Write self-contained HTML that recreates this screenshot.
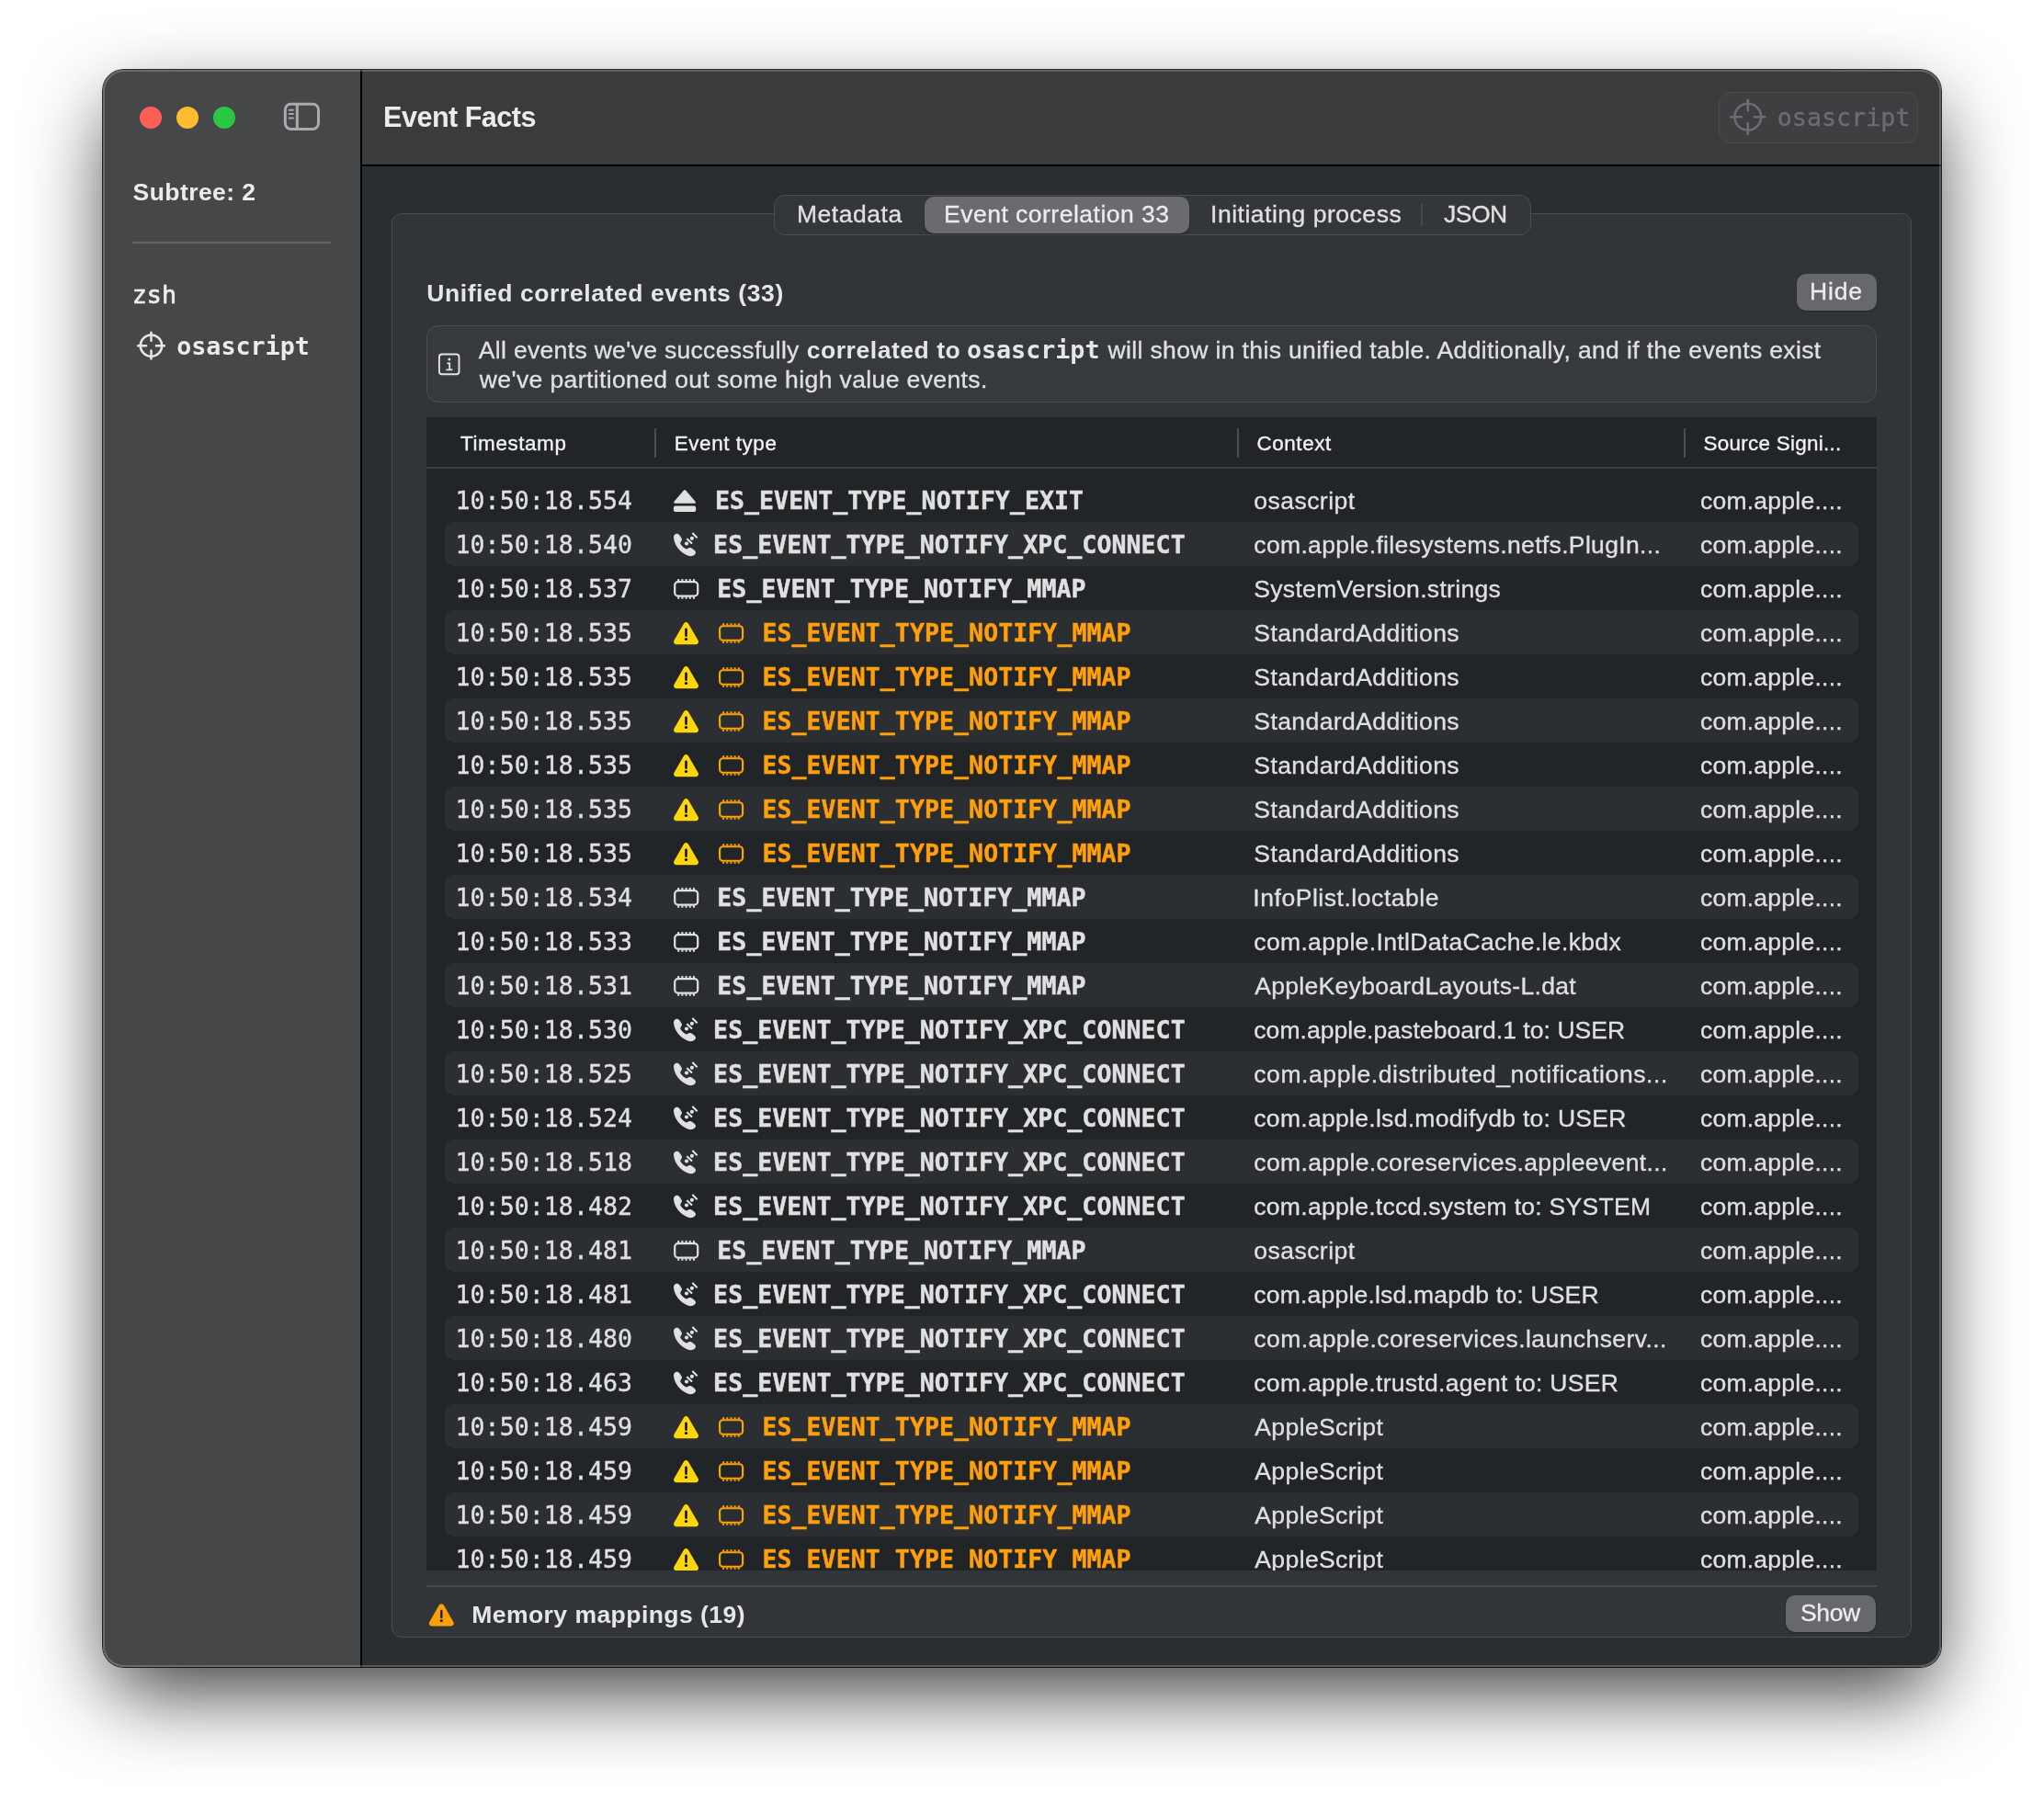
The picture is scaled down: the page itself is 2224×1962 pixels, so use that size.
<!DOCTYPE html><html lang="en"><head><meta charset="utf-8"><title>Event Facts</title><style>

html,body{margin:0;padding:0;background:#fff;}
body{width:2224px;height:1962px;position:relative;overflow:hidden;font-family:'Liberation Sans', Arial, sans-serif;}
.b{position:absolute;display:block;}
.t{position:absolute;white-space:nowrap;line-height:1;margin:0;padding:0;}
#txt{position:absolute;left:0;top:0;width:2224px;height:1962px;will-change:transform;}
#win{position:absolute;left:112px;top:76px;width:2000px;height:1738px;border-radius:23px;overflow:hidden;background:#2b2e31;}
#shadow{position:absolute;left:112px;top:76px;width:2000px;height:1738px;border-radius:23px;
 box-shadow:0 0 0 1px rgba(0,0,0,.8),0 34px 90px -9px rgba(0,0,0,.8);}
#rim{position:absolute;left:112px;top:76px;width:2000px;height:1738px;border-radius:23px;box-sizing:border-box;border:2px solid rgba(255,255,255,.2);pointer-events:none;}
#clip{position:absolute;left:0;top:0;width:2224px;height:1709px;overflow:hidden;}

</style></head><body>
<div id="shadow"></div>
<div id="win"><div class="b" style="left:-112px;top:-76px;width:2224px;height:1962px">
<div class="b" style="left:112px;top:76px;width:280px;height:1738px;background:#464749;"></div>
<div class="b" style="left:392px;top:76px;width:2px;height:1738px;background:#000;"></div>
<div class="b" style="left:394px;top:76px;width:1718px;height:103.5px;background:#3a3b3d;"></div>
<div class="b" style="left:394px;top:179.3px;width:1718px;height:1.9px;background:#000;"></div>
<div class="b" style="left:152px;top:116px;width:24px;height:24px;background:#ff5f57;border-radius:12px;"></div>
<div class="b" style="left:192px;top:116px;width:24px;height:24px;background:#febc2e;border-radius:12px;"></div>
<div class="b" style="left:232px;top:116px;width:24px;height:24px;background:#28c840;border-radius:12px;"></div>
<svg class="b" style="left:300px;top:104px" width="56" height="46" viewBox="0 0 56 46"><g fill="none" stroke="#a9aaac"><rect x="10.3" y="9.2" width="36.2" height="27.3" rx="6.2" stroke-width="3"/><path d="M23.3 9.5V36.2" stroke-width="3"/><path d="M14.6 15.7H18.9M14.6 20H18.9M14.6 24.4H18.9" stroke-width="2" stroke-linecap="round"/></g></svg>
<div class="b" style="left:144px;top:263px;width:216px;height:2px;background:#646567;"></div>
<div class="b" style="left:1869.5px;top:100px;width:217px;height:55.5px;background:#3e3f41;border-radius:12px;border:1.5px solid #4a4b4d;box-sizing:border-box;"></div>
<div class="b" style="left:426px;top:232px;width:1654px;height:1550px;background:#323538;border-radius:11px;border:1.5px solid #494c4f;box-sizing:border-box;"></div>
<div class="b" style="left:842px;top:212px;width:824px;height:44px;background:#34373a;border-radius:12px;border:1.5px solid #4a4d50;box-sizing:border-box;"></div>
<div class="b" style="left:1006px;top:214px;width:288px;height:40px;background:#6a6b6e;border-radius:10px;box-shadow:0 1px 2px rgba(0,0,0,.35);"></div>
<div class="b" style="left:1546px;top:222px;width:1.6px;height:24px;background:#45484b;"></div>
<div class="b" style="left:1954.5px;top:298px;width:87.5px;height:40px;background:#67686b;border-radius:10px;box-shadow:0 1px 2px rgba(0,0,0,.35);"></div>
<div class="b" style="left:464px;top:354px;width:1578px;height:84px;background:#373a3d;border-radius:13px;border:1.5px solid #4b4e51;box-sizing:border-box;"></div>
<svg class="b" style="left:470px;top:378px" width="38" height="38" viewBox="0 0 38 38"><g fill="none" stroke="#e3e3e3"><rect x="7.9" y="7.5" width="21.6" height="21.8" rx="3" stroke-width="1.9"/><path d="M16.4 17.4H19.2V24.3M15.4 24.4H22.4" stroke-width="1.8"/></g><circle cx="18.8" cy="12.9" r="1.5" fill="#e3e3e3"/></svg>
<div class="b" style="left:464px;top:454px;width:1578px;height:1255px;background:#222527;"></div>
<div class="b" style="left:464px;top:508px;width:1578px;height:1.6px;background:#3c3f42;"></div>
<div class="b" style="left:712.2px;top:466.4px;width:1.7px;height:31.4px;background:#4a4d50;"></div>
<div class="b" style="left:1346.0px;top:466.4px;width:1.7px;height:31.4px;background:#4a4d50;"></div>
<div class="b" style="left:1832.0px;top:466.4px;width:1.7px;height:31.4px;background:#4a4d50;"></div>
<div class="b" style="left:484px;top:568px;width:1538px;height:48px;background:#2c2f32;border-radius:10px;"></div>
<div class="b" style="left:484px;top:664px;width:1538px;height:48px;background:#2c2f32;border-radius:10px;"></div>
<div class="b" style="left:484px;top:760px;width:1538px;height:48px;background:#2c2f32;border-radius:10px;"></div>
<div class="b" style="left:484px;top:856px;width:1538px;height:48px;background:#2c2f32;border-radius:10px;"></div>
<div class="b" style="left:484px;top:952px;width:1538px;height:48px;background:#2c2f32;border-radius:10px;"></div>
<div class="b" style="left:484px;top:1048px;width:1538px;height:48px;background:#2c2f32;border-radius:10px;"></div>
<div class="b" style="left:484px;top:1144px;width:1538px;height:48px;background:#2c2f32;border-radius:10px;"></div>
<div class="b" style="left:484px;top:1240px;width:1538px;height:48px;background:#2c2f32;border-radius:10px;"></div>
<div class="b" style="left:484px;top:1336px;width:1538px;height:48px;background:#2c2f32;border-radius:10px;"></div>
<div class="b" style="left:484px;top:1432px;width:1538px;height:48px;background:#2c2f32;border-radius:10px;"></div>
<div class="b" style="left:484px;top:1528px;width:1538px;height:48px;background:#2c2f32;border-radius:10px;"></div>
<div class="b" style="left:484px;top:1624px;width:1538px;height:48px;background:#2c2f32;border-radius:10px;"></div>
<div class="b" style="left:464px;top:1725.3px;width:1578px;height:1.6px;background:#484b4e;"></div>
<div class="b" style="left:1943px;top:1736px;width:98px;height:40px;background:#67686b;border-radius:10px;box-shadow:0 1px 2px rgba(0,0,0,.35);"></div>
</div></div>
<div id="rim"></div>
<div id="txt"><div id="clip">
<div class="t" style="font-family:'DejaVu Sans Mono', 'Liberation Mono', monospace;font-size:26.5px;font-weight:400;color:#dfe0e0;left:495.50px;top:531.80px;letter-spacing:0.096px;-webkit-text-stroke:0.35px;">10:50:18.554</div>
<div class="t" style="font-family:'DejaVu Sans Mono', 'Liberation Mono', monospace;font-size:26.5px;font-weight:700;color:#dfe0e0;left:777.90px;top:531.80px;letter-spacing:0.096px;-webkit-text-stroke:0.45px;">ES_EVENT_TYPE_NOTIFY_EXIT</div>
<div class="t" style="font-family:'Liberation Sans', Arial, sans-serif;font-size:26.52px;font-weight:400;color:#dfe0e0;left:1364.30px;top:531.80px;letter-spacing:0.458px;-webkit-text-stroke:0.3px;">osascript</div>
<div class="t" style="font-family:'Liberation Sans', Arial, sans-serif;font-size:26.52px;font-weight:400;color:#dfe0e0;left:1849.90px;top:531.80px;letter-spacing:0.247px;-webkit-text-stroke:0.3px;">com.apple....</div>
<div class="t" style="font-family:'DejaVu Sans Mono', 'Liberation Mono', monospace;font-size:26.5px;font-weight:400;color:#dfe0e0;left:495.50px;top:579.80px;letter-spacing:0.096px;-webkit-text-stroke:0.35px;">10:50:18.540</div>
<div class="t" style="font-family:'DejaVu Sans Mono', 'Liberation Mono', monospace;font-size:26.5px;font-weight:700;color:#dfe0e0;left:776.10px;top:579.80px;letter-spacing:0.096px;-webkit-text-stroke:0.45px;">ES_EVENT_TYPE_NOTIFY_XPC_CONNECT</div>
<div class="t" style="font-family:'Liberation Sans', Arial, sans-serif;font-size:26.52px;font-weight:400;color:#dfe0e0;left:1364.30px;top:579.80px;letter-spacing:0.340px;-webkit-text-stroke:0.3px;">com.apple.filesystems.netfs.PlugIn...</div>
<div class="t" style="font-family:'Liberation Sans', Arial, sans-serif;font-size:26.52px;font-weight:400;color:#dfe0e0;left:1849.90px;top:579.80px;letter-spacing:0.247px;-webkit-text-stroke:0.3px;">com.apple....</div>
<div class="t" style="font-family:'DejaVu Sans Mono', 'Liberation Mono', monospace;font-size:26.5px;font-weight:400;color:#dfe0e0;left:495.50px;top:627.80px;letter-spacing:0.096px;-webkit-text-stroke:0.35px;">10:50:18.537</div>
<div class="t" style="font-family:'DejaVu Sans Mono', 'Liberation Mono', monospace;font-size:26.5px;font-weight:700;color:#dfe0e0;left:780.30px;top:627.80px;letter-spacing:0.096px;-webkit-text-stroke:0.45px;">ES_EVENT_TYPE_NOTIFY_MMAP</div>
<div class="t" style="font-family:'Liberation Sans', Arial, sans-serif;font-size:26.52px;font-weight:400;color:#dfe0e0;left:1364.30px;top:627.80px;letter-spacing:0.308px;-webkit-text-stroke:0.3px;">SystemVersion.strings</div>
<div class="t" style="font-family:'Liberation Sans', Arial, sans-serif;font-size:26.52px;font-weight:400;color:#dfe0e0;left:1849.90px;top:627.80px;letter-spacing:0.247px;-webkit-text-stroke:0.3px;">com.apple....</div>
<div class="t" style="font-family:'DejaVu Sans Mono', 'Liberation Mono', monospace;font-size:26.5px;font-weight:400;color:#dfe0e0;left:495.50px;top:675.80px;letter-spacing:0.096px;-webkit-text-stroke:0.35px;">10:50:18.535</div>
<div class="t" style="font-family:'DejaVu Sans Mono', 'Liberation Mono', monospace;font-size:26.5px;font-weight:700;color:#ff9f0a;left:829.40px;top:675.80px;letter-spacing:0.096px;-webkit-text-stroke:0.45px;">ES_EVENT_TYPE_NOTIFY_MMAP</div>
<div class="t" style="font-family:'Liberation Sans', Arial, sans-serif;font-size:26.52px;font-weight:400;color:#dfe0e0;left:1364.30px;top:675.80px;letter-spacing:0.410px;-webkit-text-stroke:0.3px;">StandardAdditions</div>
<div class="t" style="font-family:'Liberation Sans', Arial, sans-serif;font-size:26.52px;font-weight:400;color:#dfe0e0;left:1849.90px;top:675.80px;letter-spacing:0.247px;-webkit-text-stroke:0.3px;">com.apple....</div>
<div class="t" style="font-family:'DejaVu Sans Mono', 'Liberation Mono', monospace;font-size:26.5px;font-weight:400;color:#dfe0e0;left:495.50px;top:723.80px;letter-spacing:0.096px;-webkit-text-stroke:0.35px;">10:50:18.535</div>
<div class="t" style="font-family:'DejaVu Sans Mono', 'Liberation Mono', monospace;font-size:26.5px;font-weight:700;color:#ff9f0a;left:829.40px;top:723.80px;letter-spacing:0.096px;-webkit-text-stroke:0.45px;">ES_EVENT_TYPE_NOTIFY_MMAP</div>
<div class="t" style="font-family:'Liberation Sans', Arial, sans-serif;font-size:26.52px;font-weight:400;color:#dfe0e0;left:1364.30px;top:723.80px;letter-spacing:0.410px;-webkit-text-stroke:0.3px;">StandardAdditions</div>
<div class="t" style="font-family:'Liberation Sans', Arial, sans-serif;font-size:26.52px;font-weight:400;color:#dfe0e0;left:1849.90px;top:723.80px;letter-spacing:0.247px;-webkit-text-stroke:0.3px;">com.apple....</div>
<div class="t" style="font-family:'DejaVu Sans Mono', 'Liberation Mono', monospace;font-size:26.5px;font-weight:400;color:#dfe0e0;left:495.50px;top:771.80px;letter-spacing:0.096px;-webkit-text-stroke:0.35px;">10:50:18.535</div>
<div class="t" style="font-family:'DejaVu Sans Mono', 'Liberation Mono', monospace;font-size:26.5px;font-weight:700;color:#ff9f0a;left:829.40px;top:771.80px;letter-spacing:0.096px;-webkit-text-stroke:0.45px;">ES_EVENT_TYPE_NOTIFY_MMAP</div>
<div class="t" style="font-family:'Liberation Sans', Arial, sans-serif;font-size:26.52px;font-weight:400;color:#dfe0e0;left:1364.30px;top:771.80px;letter-spacing:0.410px;-webkit-text-stroke:0.3px;">StandardAdditions</div>
<div class="t" style="font-family:'Liberation Sans', Arial, sans-serif;font-size:26.52px;font-weight:400;color:#dfe0e0;left:1849.90px;top:771.80px;letter-spacing:0.247px;-webkit-text-stroke:0.3px;">com.apple....</div>
<div class="t" style="font-family:'DejaVu Sans Mono', 'Liberation Mono', monospace;font-size:26.5px;font-weight:400;color:#dfe0e0;left:495.50px;top:819.80px;letter-spacing:0.096px;-webkit-text-stroke:0.35px;">10:50:18.535</div>
<div class="t" style="font-family:'DejaVu Sans Mono', 'Liberation Mono', monospace;font-size:26.5px;font-weight:700;color:#ff9f0a;left:829.40px;top:819.80px;letter-spacing:0.096px;-webkit-text-stroke:0.45px;">ES_EVENT_TYPE_NOTIFY_MMAP</div>
<div class="t" style="font-family:'Liberation Sans', Arial, sans-serif;font-size:26.52px;font-weight:400;color:#dfe0e0;left:1364.30px;top:819.80px;letter-spacing:0.410px;-webkit-text-stroke:0.3px;">StandardAdditions</div>
<div class="t" style="font-family:'Liberation Sans', Arial, sans-serif;font-size:26.52px;font-weight:400;color:#dfe0e0;left:1849.90px;top:819.80px;letter-spacing:0.247px;-webkit-text-stroke:0.3px;">com.apple....</div>
<div class="t" style="font-family:'DejaVu Sans Mono', 'Liberation Mono', monospace;font-size:26.5px;font-weight:400;color:#dfe0e0;left:495.50px;top:867.80px;letter-spacing:0.096px;-webkit-text-stroke:0.35px;">10:50:18.535</div>
<div class="t" style="font-family:'DejaVu Sans Mono', 'Liberation Mono', monospace;font-size:26.5px;font-weight:700;color:#ff9f0a;left:829.40px;top:867.80px;letter-spacing:0.096px;-webkit-text-stroke:0.45px;">ES_EVENT_TYPE_NOTIFY_MMAP</div>
<div class="t" style="font-family:'Liberation Sans', Arial, sans-serif;font-size:26.52px;font-weight:400;color:#dfe0e0;left:1364.30px;top:867.80px;letter-spacing:0.410px;-webkit-text-stroke:0.3px;">StandardAdditions</div>
<div class="t" style="font-family:'Liberation Sans', Arial, sans-serif;font-size:26.52px;font-weight:400;color:#dfe0e0;left:1849.90px;top:867.80px;letter-spacing:0.247px;-webkit-text-stroke:0.3px;">com.apple....</div>
<div class="t" style="font-family:'DejaVu Sans Mono', 'Liberation Mono', monospace;font-size:26.5px;font-weight:400;color:#dfe0e0;left:495.50px;top:915.80px;letter-spacing:0.096px;-webkit-text-stroke:0.35px;">10:50:18.535</div>
<div class="t" style="font-family:'DejaVu Sans Mono', 'Liberation Mono', monospace;font-size:26.5px;font-weight:700;color:#ff9f0a;left:829.40px;top:915.80px;letter-spacing:0.096px;-webkit-text-stroke:0.45px;">ES_EVENT_TYPE_NOTIFY_MMAP</div>
<div class="t" style="font-family:'Liberation Sans', Arial, sans-serif;font-size:26.52px;font-weight:400;color:#dfe0e0;left:1364.30px;top:915.80px;letter-spacing:0.410px;-webkit-text-stroke:0.3px;">StandardAdditions</div>
<div class="t" style="font-family:'Liberation Sans', Arial, sans-serif;font-size:26.52px;font-weight:400;color:#dfe0e0;left:1849.90px;top:915.80px;letter-spacing:0.247px;-webkit-text-stroke:0.3px;">com.apple....</div>
<div class="t" style="font-family:'DejaVu Sans Mono', 'Liberation Mono', monospace;font-size:26.5px;font-weight:400;color:#dfe0e0;left:495.50px;top:963.80px;letter-spacing:0.096px;-webkit-text-stroke:0.35px;">10:50:18.534</div>
<div class="t" style="font-family:'DejaVu Sans Mono', 'Liberation Mono', monospace;font-size:26.5px;font-weight:700;color:#dfe0e0;left:780.30px;top:963.80px;letter-spacing:0.096px;-webkit-text-stroke:0.45px;">ES_EVENT_TYPE_NOTIFY_MMAP</div>
<div class="t" style="font-family:'Liberation Sans', Arial, sans-serif;font-size:26.52px;font-weight:400;color:#dfe0e0;left:1363.30px;top:963.80px;letter-spacing:0.539px;-webkit-text-stroke:0.3px;">InfoPlist.loctable</div>
<div class="t" style="font-family:'Liberation Sans', Arial, sans-serif;font-size:26.52px;font-weight:400;color:#dfe0e0;left:1849.90px;top:963.80px;letter-spacing:0.247px;-webkit-text-stroke:0.3px;">com.apple....</div>
<div class="t" style="font-family:'DejaVu Sans Mono', 'Liberation Mono', monospace;font-size:26.5px;font-weight:400;color:#dfe0e0;left:495.50px;top:1011.80px;letter-spacing:0.096px;-webkit-text-stroke:0.35px;">10:50:18.533</div>
<div class="t" style="font-family:'DejaVu Sans Mono', 'Liberation Mono', monospace;font-size:26.5px;font-weight:700;color:#dfe0e0;left:780.30px;top:1011.80px;letter-spacing:0.096px;-webkit-text-stroke:0.45px;">ES_EVENT_TYPE_NOTIFY_MMAP</div>
<div class="t" style="font-family:'Liberation Sans', Arial, sans-serif;font-size:26.52px;font-weight:400;color:#dfe0e0;left:1364.30px;top:1011.80px;letter-spacing:0.342px;-webkit-text-stroke:0.3px;">com.apple.IntlDataCache.le.kbdx</div>
<div class="t" style="font-family:'Liberation Sans', Arial, sans-serif;font-size:26.52px;font-weight:400;color:#dfe0e0;left:1849.90px;top:1011.80px;letter-spacing:0.247px;-webkit-text-stroke:0.3px;">com.apple....</div>
<div class="t" style="font-family:'DejaVu Sans Mono', 'Liberation Mono', monospace;font-size:26.5px;font-weight:400;color:#dfe0e0;left:495.50px;top:1059.80px;letter-spacing:0.096px;-webkit-text-stroke:0.35px;">10:50:18.531</div>
<div class="t" style="font-family:'DejaVu Sans Mono', 'Liberation Mono', monospace;font-size:26.5px;font-weight:700;color:#dfe0e0;left:780.30px;top:1059.80px;letter-spacing:0.096px;-webkit-text-stroke:0.45px;">ES_EVENT_TYPE_NOTIFY_MMAP</div>
<div class="t" style="font-family:'Liberation Sans', Arial, sans-serif;font-size:26.52px;font-weight:400;color:#dfe0e0;left:1365.30px;top:1059.80px;letter-spacing:0.291px;-webkit-text-stroke:0.3px;">AppleKeyboardLayouts-L.dat</div>
<div class="t" style="font-family:'Liberation Sans', Arial, sans-serif;font-size:26.52px;font-weight:400;color:#dfe0e0;left:1849.90px;top:1059.80px;letter-spacing:0.247px;-webkit-text-stroke:0.3px;">com.apple....</div>
<div class="t" style="font-family:'DejaVu Sans Mono', 'Liberation Mono', monospace;font-size:26.5px;font-weight:400;color:#dfe0e0;left:495.50px;top:1107.80px;letter-spacing:0.096px;-webkit-text-stroke:0.35px;">10:50:18.530</div>
<div class="t" style="font-family:'DejaVu Sans Mono', 'Liberation Mono', monospace;font-size:26.5px;font-weight:700;color:#dfe0e0;left:776.10px;top:1107.80px;letter-spacing:0.096px;-webkit-text-stroke:0.45px;">ES_EVENT_TYPE_NOTIFY_XPC_CONNECT</div>
<div class="t" style="font-family:'Liberation Sans', Arial, sans-serif;font-size:26.52px;font-weight:400;color:#dfe0e0;left:1364.30px;top:1107.80px;letter-spacing:0.052px;-webkit-text-stroke:0.3px;">com.apple.pasteboard.1 to: USER</div>
<div class="t" style="font-family:'Liberation Sans', Arial, sans-serif;font-size:26.52px;font-weight:400;color:#dfe0e0;left:1849.90px;top:1107.80px;letter-spacing:0.247px;-webkit-text-stroke:0.3px;">com.apple....</div>
<div class="t" style="font-family:'DejaVu Sans Mono', 'Liberation Mono', monospace;font-size:26.5px;font-weight:400;color:#dfe0e0;left:495.50px;top:1155.80px;letter-spacing:0.096px;-webkit-text-stroke:0.35px;">10:50:18.525</div>
<div class="t" style="font-family:'DejaVu Sans Mono', 'Liberation Mono', monospace;font-size:26.5px;font-weight:700;color:#dfe0e0;left:776.10px;top:1155.80px;letter-spacing:0.096px;-webkit-text-stroke:0.45px;">ES_EVENT_TYPE_NOTIFY_XPC_CONNECT</div>
<div class="t" style="font-family:'Liberation Sans', Arial, sans-serif;font-size:26.52px;font-weight:400;color:#dfe0e0;left:1364.30px;top:1155.80px;letter-spacing:0.569px;-webkit-text-stroke:0.3px;">com.apple.distributed_notifications...</div>
<div class="t" style="font-family:'Liberation Sans', Arial, sans-serif;font-size:26.52px;font-weight:400;color:#dfe0e0;left:1849.90px;top:1155.80px;letter-spacing:0.247px;-webkit-text-stroke:0.3px;">com.apple....</div>
<div class="t" style="font-family:'DejaVu Sans Mono', 'Liberation Mono', monospace;font-size:26.5px;font-weight:400;color:#dfe0e0;left:495.50px;top:1203.80px;letter-spacing:0.096px;-webkit-text-stroke:0.35px;">10:50:18.524</div>
<div class="t" style="font-family:'DejaVu Sans Mono', 'Liberation Mono', monospace;font-size:26.5px;font-weight:700;color:#dfe0e0;left:776.10px;top:1203.80px;letter-spacing:0.096px;-webkit-text-stroke:0.45px;">ES_EVENT_TYPE_NOTIFY_XPC_CONNECT</div>
<div class="t" style="font-family:'Liberation Sans', Arial, sans-serif;font-size:26.52px;font-weight:400;color:#dfe0e0;left:1364.30px;top:1203.80px;letter-spacing:0.290px;-webkit-text-stroke:0.3px;">com.apple.lsd.modifydb to: USER</div>
<div class="t" style="font-family:'Liberation Sans', Arial, sans-serif;font-size:26.52px;font-weight:400;color:#dfe0e0;left:1849.90px;top:1203.80px;letter-spacing:0.247px;-webkit-text-stroke:0.3px;">com.apple....</div>
<div class="t" style="font-family:'DejaVu Sans Mono', 'Liberation Mono', monospace;font-size:26.5px;font-weight:400;color:#dfe0e0;left:495.50px;top:1251.80px;letter-spacing:0.096px;-webkit-text-stroke:0.35px;">10:50:18.518</div>
<div class="t" style="font-family:'DejaVu Sans Mono', 'Liberation Mono', monospace;font-size:26.5px;font-weight:700;color:#dfe0e0;left:776.10px;top:1251.80px;letter-spacing:0.096px;-webkit-text-stroke:0.45px;">ES_EVENT_TYPE_NOTIFY_XPC_CONNECT</div>
<div class="t" style="font-family:'Liberation Sans', Arial, sans-serif;font-size:26.52px;font-weight:400;color:#dfe0e0;left:1364.30px;top:1251.80px;letter-spacing:0.349px;-webkit-text-stroke:0.3px;">com.apple.coreservices.appleevent...</div>
<div class="t" style="font-family:'Liberation Sans', Arial, sans-serif;font-size:26.52px;font-weight:400;color:#dfe0e0;left:1849.90px;top:1251.80px;letter-spacing:0.247px;-webkit-text-stroke:0.3px;">com.apple....</div>
<div class="t" style="font-family:'DejaVu Sans Mono', 'Liberation Mono', monospace;font-size:26.5px;font-weight:400;color:#dfe0e0;left:495.50px;top:1299.80px;letter-spacing:0.096px;-webkit-text-stroke:0.35px;">10:50:18.482</div>
<div class="t" style="font-family:'DejaVu Sans Mono', 'Liberation Mono', monospace;font-size:26.5px;font-weight:700;color:#dfe0e0;left:776.10px;top:1299.80px;letter-spacing:0.096px;-webkit-text-stroke:0.45px;">ES_EVENT_TYPE_NOTIFY_XPC_CONNECT</div>
<div class="t" style="font-family:'Liberation Sans', Arial, sans-serif;font-size:26.52px;font-weight:400;color:#dfe0e0;left:1364.30px;top:1299.80px;letter-spacing:0.286px;-webkit-text-stroke:0.3px;">com.apple.tccd.system to: SYSTEM</div>
<div class="t" style="font-family:'Liberation Sans', Arial, sans-serif;font-size:26.52px;font-weight:400;color:#dfe0e0;left:1849.90px;top:1299.80px;letter-spacing:0.247px;-webkit-text-stroke:0.3px;">com.apple....</div>
<div class="t" style="font-family:'DejaVu Sans Mono', 'Liberation Mono', monospace;font-size:26.5px;font-weight:400;color:#dfe0e0;left:495.50px;top:1347.80px;letter-spacing:0.096px;-webkit-text-stroke:0.35px;">10:50:18.481</div>
<div class="t" style="font-family:'DejaVu Sans Mono', 'Liberation Mono', monospace;font-size:26.5px;font-weight:700;color:#dfe0e0;left:780.30px;top:1347.80px;letter-spacing:0.096px;-webkit-text-stroke:0.45px;">ES_EVENT_TYPE_NOTIFY_MMAP</div>
<div class="t" style="font-family:'Liberation Sans', Arial, sans-serif;font-size:26.52px;font-weight:400;color:#dfe0e0;left:1364.30px;top:1347.80px;letter-spacing:0.458px;-webkit-text-stroke:0.3px;">osascript</div>
<div class="t" style="font-family:'Liberation Sans', Arial, sans-serif;font-size:26.52px;font-weight:400;color:#dfe0e0;left:1849.90px;top:1347.80px;letter-spacing:0.247px;-webkit-text-stroke:0.3px;">com.apple....</div>
<div class="t" style="font-family:'DejaVu Sans Mono', 'Liberation Mono', monospace;font-size:26.5px;font-weight:400;color:#dfe0e0;left:495.50px;top:1395.80px;letter-spacing:0.096px;-webkit-text-stroke:0.35px;">10:50:18.481</div>
<div class="t" style="font-family:'DejaVu Sans Mono', 'Liberation Mono', monospace;font-size:26.5px;font-weight:700;color:#dfe0e0;left:776.10px;top:1395.80px;letter-spacing:0.096px;-webkit-text-stroke:0.45px;">ES_EVENT_TYPE_NOTIFY_XPC_CONNECT</div>
<div class="t" style="font-family:'Liberation Sans', Arial, sans-serif;font-size:26.52px;font-weight:400;color:#dfe0e0;left:1364.30px;top:1395.80px;letter-spacing:0.201px;-webkit-text-stroke:0.3px;">com.apple.lsd.mapdb to: USER</div>
<div class="t" style="font-family:'Liberation Sans', Arial, sans-serif;font-size:26.52px;font-weight:400;color:#dfe0e0;left:1849.90px;top:1395.80px;letter-spacing:0.247px;-webkit-text-stroke:0.3px;">com.apple....</div>
<div class="t" style="font-family:'DejaVu Sans Mono', 'Liberation Mono', monospace;font-size:26.5px;font-weight:400;color:#dfe0e0;left:495.50px;top:1443.80px;letter-spacing:0.096px;-webkit-text-stroke:0.35px;">10:50:18.480</div>
<div class="t" style="font-family:'DejaVu Sans Mono', 'Liberation Mono', monospace;font-size:26.5px;font-weight:700;color:#dfe0e0;left:776.10px;top:1443.80px;letter-spacing:0.096px;-webkit-text-stroke:0.45px;">ES_EVENT_TYPE_NOTIFY_XPC_CONNECT</div>
<div class="t" style="font-family:'Liberation Sans', Arial, sans-serif;font-size:26.52px;font-weight:400;color:#dfe0e0;left:1364.30px;top:1443.80px;letter-spacing:0.426px;-webkit-text-stroke:0.3px;">com.apple.coreservices.launchserv...</div>
<div class="t" style="font-family:'Liberation Sans', Arial, sans-serif;font-size:26.52px;font-weight:400;color:#dfe0e0;left:1849.90px;top:1443.80px;letter-spacing:0.247px;-webkit-text-stroke:0.3px;">com.apple....</div>
<div class="t" style="font-family:'DejaVu Sans Mono', 'Liberation Mono', monospace;font-size:26.5px;font-weight:400;color:#dfe0e0;left:495.50px;top:1491.80px;letter-spacing:0.096px;-webkit-text-stroke:0.35px;">10:50:18.463</div>
<div class="t" style="font-family:'DejaVu Sans Mono', 'Liberation Mono', monospace;font-size:26.5px;font-weight:700;color:#dfe0e0;left:776.10px;top:1491.80px;letter-spacing:0.096px;-webkit-text-stroke:0.45px;">ES_EVENT_TYPE_NOTIFY_XPC_CONNECT</div>
<div class="t" style="font-family:'Liberation Sans', Arial, sans-serif;font-size:26.52px;font-weight:400;color:#dfe0e0;left:1364.30px;top:1491.80px;letter-spacing:0.298px;-webkit-text-stroke:0.3px;">com.apple.trustd.agent to: USER</div>
<div class="t" style="font-family:'Liberation Sans', Arial, sans-serif;font-size:26.52px;font-weight:400;color:#dfe0e0;left:1849.90px;top:1491.80px;letter-spacing:0.247px;-webkit-text-stroke:0.3px;">com.apple....</div>
<div class="t" style="font-family:'DejaVu Sans Mono', 'Liberation Mono', monospace;font-size:26.5px;font-weight:400;color:#dfe0e0;left:495.50px;top:1539.80px;letter-spacing:0.096px;-webkit-text-stroke:0.35px;">10:50:18.459</div>
<div class="t" style="font-family:'DejaVu Sans Mono', 'Liberation Mono', monospace;font-size:26.5px;font-weight:700;color:#ff9f0a;left:829.40px;top:1539.80px;letter-spacing:0.096px;-webkit-text-stroke:0.45px;">ES_EVENT_TYPE_NOTIFY_MMAP</div>
<div class="t" style="font-family:'Liberation Sans', Arial, sans-serif;font-size:26.52px;font-weight:400;color:#dfe0e0;left:1365.30px;top:1539.80px;letter-spacing:0.387px;-webkit-text-stroke:0.3px;">AppleScript</div>
<div class="t" style="font-family:'Liberation Sans', Arial, sans-serif;font-size:26.52px;font-weight:400;color:#dfe0e0;left:1849.90px;top:1539.80px;letter-spacing:0.247px;-webkit-text-stroke:0.3px;">com.apple....</div>
<div class="t" style="font-family:'DejaVu Sans Mono', 'Liberation Mono', monospace;font-size:26.5px;font-weight:400;color:#dfe0e0;left:495.50px;top:1587.80px;letter-spacing:0.096px;-webkit-text-stroke:0.35px;">10:50:18.459</div>
<div class="t" style="font-family:'DejaVu Sans Mono', 'Liberation Mono', monospace;font-size:26.5px;font-weight:700;color:#ff9f0a;left:829.40px;top:1587.80px;letter-spacing:0.096px;-webkit-text-stroke:0.45px;">ES_EVENT_TYPE_NOTIFY_MMAP</div>
<div class="t" style="font-family:'Liberation Sans', Arial, sans-serif;font-size:26.52px;font-weight:400;color:#dfe0e0;left:1365.30px;top:1587.80px;letter-spacing:0.387px;-webkit-text-stroke:0.3px;">AppleScript</div>
<div class="t" style="font-family:'Liberation Sans', Arial, sans-serif;font-size:26.52px;font-weight:400;color:#dfe0e0;left:1849.90px;top:1587.80px;letter-spacing:0.247px;-webkit-text-stroke:0.3px;">com.apple....</div>
<div class="t" style="font-family:'DejaVu Sans Mono', 'Liberation Mono', monospace;font-size:26.5px;font-weight:400;color:#dfe0e0;left:495.50px;top:1635.80px;letter-spacing:0.096px;-webkit-text-stroke:0.35px;">10:50:18.459</div>
<div class="t" style="font-family:'DejaVu Sans Mono', 'Liberation Mono', monospace;font-size:26.5px;font-weight:700;color:#ff9f0a;left:829.40px;top:1635.80px;letter-spacing:0.096px;-webkit-text-stroke:0.45px;">ES_EVENT_TYPE_NOTIFY_MMAP</div>
<div class="t" style="font-family:'Liberation Sans', Arial, sans-serif;font-size:26.52px;font-weight:400;color:#dfe0e0;left:1365.30px;top:1635.80px;letter-spacing:0.387px;-webkit-text-stroke:0.3px;">AppleScript</div>
<div class="t" style="font-family:'Liberation Sans', Arial, sans-serif;font-size:26.52px;font-weight:400;color:#dfe0e0;left:1849.90px;top:1635.80px;letter-spacing:0.247px;-webkit-text-stroke:0.3px;">com.apple....</div>
<div class="t" style="font-family:'DejaVu Sans Mono', 'Liberation Mono', monospace;font-size:26.5px;font-weight:400;color:#dfe0e0;left:495.50px;top:1683.80px;letter-spacing:0.096px;-webkit-text-stroke:0.35px;">10:50:18.459</div>
<div class="t" style="font-family:'DejaVu Sans Mono', 'Liberation Mono', monospace;font-size:26.5px;font-weight:700;color:#ff9f0a;left:829.40px;top:1683.80px;letter-spacing:0.096px;-webkit-text-stroke:0.45px;">ES_EVENT_TYPE_NOTIFY_MMAP</div>
<div class="t" style="font-family:'Liberation Sans', Arial, sans-serif;font-size:26.52px;font-weight:400;color:#dfe0e0;left:1365.30px;top:1683.80px;letter-spacing:0.387px;-webkit-text-stroke:0.3px;">AppleScript</div>
<div class="t" style="font-family:'Liberation Sans', Arial, sans-serif;font-size:26.52px;font-weight:400;color:#dfe0e0;left:1849.90px;top:1683.80px;letter-spacing:0.247px;-webkit-text-stroke:0.3px;">com.apple....</div>
</div>
<div class="t" style="font-family:'Liberation Sans', Arial, sans-serif;font-size:26.52px;font-weight:700;color:#ececec;left:144.60px;top:196.00px;letter-spacing:0.420px;">Subtree: 2</div>
<div class="t" style="font-family:'DejaVu Sans Mono', 'Liberation Mono', monospace;font-size:26.7px;font-weight:400;color:#ececec;left:143.80px;top:307.90px;-webkit-text-stroke:0.7px #ececec;">zsh</div>
<div class="t" style="font-family:'DejaVu Sans Mono', 'Liberation Mono', monospace;font-size:26.7px;font-weight:700;color:#ececec;left:192.20px;top:363.90px;">osascript</div>
<div class="t" style="font-family:'Liberation Sans', Arial, sans-serif;font-size:30.6px;font-weight:700;color:#ececec;left:417.10px;top:111.80px;letter-spacing:-0.532px;">Event Facts</div>
<div class="t" style="font-family:'DejaVu Sans Mono', 'Liberation Mono', monospace;font-size:26.7px;font-weight:400;color:#6c6d70;left:1933.80px;top:115.00px;-webkit-text-stroke:0.35px;">osascript</div>
<div class="t" style="font-family:'Liberation Sans', Arial, sans-serif;font-size:26.52px;font-weight:400;color:#dfe0e0;left:867.00px;top:219.90px;letter-spacing:0.513px;-webkit-text-stroke:0.3px;">Metadata</div>
<div class="t" style="font-family:'Liberation Sans', Arial, sans-serif;font-size:26.52px;font-weight:400;color:#ececec;left:1027.00px;top:219.90px;letter-spacing:0.485px;-webkit-text-stroke:0.3px;">Event correlation 33</div>
<div class="t" style="font-family:'Liberation Sans', Arial, sans-serif;font-size:26.52px;font-weight:400;color:#dfe0e0;left:1317.00px;top:219.90px;letter-spacing:0.511px;-webkit-text-stroke:0.3px;">Initiating process</div>
<div class="t" style="font-family:'Liberation Sans', Arial, sans-serif;font-size:26.52px;font-weight:400;color:#dfe0e0;left:1571.00px;top:219.90px;letter-spacing:-0.523px;-webkit-text-stroke:0.3px;">JSON</div>
<div class="t" style="font-family:'Liberation Sans', Arial, sans-serif;font-size:26.52px;font-weight:700;color:#e6e6e6;left:464.20px;top:306.40px;letter-spacing:0.576px;">Unified correlated events (33)</div>
<div class="t" style="font-family:'Liberation Sans', Arial, sans-serif;font-size:26.52px;font-weight:400;color:#ececec;left:1969.00px;top:303.70px;letter-spacing:0.838px;-webkit-text-stroke:0.3px;">Hide</div>
<div class="t" style="font-family:'Liberation Sans', Arial, sans-serif;font-size:26.52px;font-weight:400;color:#dfe0e0;left:520.80px;top:368.00px;letter-spacing:0.320px;-webkit-text-stroke:0.3px;">All events we've successfully</div>
<div class="t" style="font-family:'Liberation Sans', Arial, sans-serif;font-size:26.52px;font-weight:700;color:#e6e6e6;left:877.70px;top:368.00px;letter-spacing:0.541px;">correlated to</div>
<div class="t" style="font-family:'DejaVu Sans Mono', 'Liberation Mono', monospace;font-size:26.7px;font-weight:700;color:#e6e6e6;left:1051.90px;top:368.00px;">osascript</div>
<div class="t" style="font-family:'Liberation Sans', Arial, sans-serif;font-size:26.52px;font-weight:400;color:#dfe0e0;left:1205.50px;top:368.00px;letter-spacing:0.355px;-webkit-text-stroke:0.3px;">will show in this unified table. Additionally, and if the events exist</div>
<div class="t" style="font-family:'Liberation Sans', Arial, sans-serif;font-size:26.52px;font-weight:400;color:#dfe0e0;left:521.80px;top:399.90px;letter-spacing:0.383px;-webkit-text-stroke:0.3px;">we've partitioned out some high value events.</div>
<div class="t" style="font-family:'Liberation Sans', Arial, sans-serif;font-size:22.44px;font-weight:400;color:#f2f2f2;left:501.10px;top:471.70px;letter-spacing:0.581px;-webkit-text-stroke:0.35px #f2f2f2;">Timestamp</div>
<div class="t" style="font-family:'Liberation Sans', Arial, sans-serif;font-size:22.44px;font-weight:400;color:#f2f2f2;left:733.80px;top:471.70px;letter-spacing:0.562px;-webkit-text-stroke:0.35px #f2f2f2;">Event type</div>
<div class="t" style="font-family:'Liberation Sans', Arial, sans-serif;font-size:22.44px;font-weight:400;color:#f2f2f2;left:1367.60px;top:471.70px;letter-spacing:0.535px;-webkit-text-stroke:0.35px #f2f2f2;">Context</div>
<div class="t" style="font-family:'Liberation Sans', Arial, sans-serif;font-size:22.44px;font-weight:400;color:#f2f2f2;left:1853.60px;top:471.70px;letter-spacing:0.265px;-webkit-text-stroke:0.35px #f2f2f2;">Source Signi...</div>
<div class="t" style="font-family:'Liberation Sans', Arial, sans-serif;font-size:26.52px;font-weight:700;color:#e6e6e6;left:513.20px;top:1744.30px;letter-spacing:0.450px;">Memory mappings (19)</div>
<div class="t" style="font-family:'Liberation Sans', Arial, sans-serif;font-size:26.52px;font-weight:400;color:#ececec;left:1959.00px;top:1741.70px;letter-spacing:-0.393px;-webkit-text-stroke:0.3px;">Show</div>
</div>
<svg class="b" style="left:0;top:0" width="2224" height="1962" viewBox="0 0 2224 1962"><defs><clipPath id="tc"><rect x="0" y="0" width="2224" height="1709"/></clipPath></defs><g clip-path="url(#tc)"><path d="M745.05 534.4 L755.5999999999999 546.5 L734.5 546.5 Z" fill="#dfe0e0" stroke="#dfe0e0" stroke-width="2.6" stroke-linejoin="round"/><rect x="732.9" y="550.4" width="24.3" height="6.7" rx="2" fill="#dfe0e0"/><g transform="translate(720 568)" fill="#dfe0e0"><path d="M13.0 17.2 C12.7 14.6 14.6 12.6 17.2 12.8 C18.6 12.9 21.2 16.6 21.9 18.6 C22.4 20.2 20.6 21.6 20.1 23.0 C21.2 25.6 23.8 28.2 26.6 29.6 C28.0 29.2 29.6 27.4 31.2 28.0 C33.2 28.8 36.6 31.2 37.0 32.8 C37.4 35.0 34.6 37.4 31.4 37.2 C27.6 36.8 22.2 33.6 18.4 29.4 C15.2 25.8 13.4 21.0 13.0 17.2 Z"/><circle cx="27.0" cy="23.5" r="2.1"/><circle cx="32.9" cy="17.8" r="2.1"/><path d="M27.9 18.7 L32.4 23.0 M33.9 12.5 L38.1 16.8" stroke="#dfe0e0" stroke-width="2.1" stroke-linecap="round" fill="none"/></g><g stroke="#dfe0e0" fill="none" stroke-width="2.2"><rect x="734.20" y="633.10" width="25.00" height="15.50" rx="3.6"/><path d="M738.20 632.40v-2.4M738.20 649.30v2.4M742.38 632.40v-2.4M742.38 649.30v2.4M746.56 632.40v-2.4M746.56 649.30v2.4M750.74 632.40v-2.4M750.74 649.30v2.4M754.92 632.40v-2.4M754.92 649.30v2.4" stroke-width="2"/></g><path d="M746.5 680.2 L756.9 698.3000000000001 L736.0999999999999 698.3000000000001 Z" fill="#ffd60a" stroke="#ffd60a" stroke-width="6.0" stroke-linejoin="round"/><path d="M746.5 684.8000000000001V691.8000000000001" stroke="#000" stroke-width="2.4" stroke-linecap="round"/><circle cx="746.5" cy="695.5" r="1.6" fill="#000"/><g stroke="#ff9f0a" fill="none" stroke-width="2.2"><rect x="783.10" y="681.25" width="25.00" height="15.50" rx="3.6"/><path d="M787.10 680.55v-2.4M787.10 697.45v2.4M791.28 680.55v-2.4M791.28 697.45v2.4M795.46 680.55v-2.4M795.46 697.45v2.4M799.64 680.55v-2.4M799.64 697.45v2.4M803.82 680.55v-2.4M803.82 697.45v2.4" stroke-width="2"/></g><path d="M746.5 728.2 L756.9 746.3000000000001 L736.0999999999999 746.3000000000001 Z" fill="#ffd60a" stroke="#ffd60a" stroke-width="6.0" stroke-linejoin="round"/><path d="M746.5 732.8000000000001V739.8000000000001" stroke="#000" stroke-width="2.4" stroke-linecap="round"/><circle cx="746.5" cy="743.5" r="1.6" fill="#000"/><g stroke="#ff9f0a" fill="none" stroke-width="2.2"><rect x="783.10" y="729.25" width="25.00" height="15.50" rx="3.6"/><path d="M787.10 728.55v-2.4M787.10 745.45v2.4M791.28 728.55v-2.4M791.28 745.45v2.4M795.46 728.55v-2.4M795.46 745.45v2.4M799.64 728.55v-2.4M799.64 745.45v2.4M803.82 728.55v-2.4M803.82 745.45v2.4" stroke-width="2"/></g><path d="M746.5 776.2 L756.9 794.3000000000001 L736.0999999999999 794.3000000000001 Z" fill="#ffd60a" stroke="#ffd60a" stroke-width="6.0" stroke-linejoin="round"/><path d="M746.5 780.8000000000001V787.8000000000001" stroke="#000" stroke-width="2.4" stroke-linecap="round"/><circle cx="746.5" cy="791.5" r="1.6" fill="#000"/><g stroke="#ff9f0a" fill="none" stroke-width="2.2"><rect x="783.10" y="777.25" width="25.00" height="15.50" rx="3.6"/><path d="M787.10 776.55v-2.4M787.10 793.45v2.4M791.28 776.55v-2.4M791.28 793.45v2.4M795.46 776.55v-2.4M795.46 793.45v2.4M799.64 776.55v-2.4M799.64 793.45v2.4M803.82 776.55v-2.4M803.82 793.45v2.4" stroke-width="2"/></g><path d="M746.5 824.2 L756.9 842.3000000000001 L736.0999999999999 842.3000000000001 Z" fill="#ffd60a" stroke="#ffd60a" stroke-width="6.0" stroke-linejoin="round"/><path d="M746.5 828.8000000000001V835.8000000000001" stroke="#000" stroke-width="2.4" stroke-linecap="round"/><circle cx="746.5" cy="839.5" r="1.6" fill="#000"/><g stroke="#ff9f0a" fill="none" stroke-width="2.2"><rect x="783.10" y="825.25" width="25.00" height="15.50" rx="3.6"/><path d="M787.10 824.55v-2.4M787.10 841.45v2.4M791.28 824.55v-2.4M791.28 841.45v2.4M795.46 824.55v-2.4M795.46 841.45v2.4M799.64 824.55v-2.4M799.64 841.45v2.4M803.82 824.55v-2.4M803.82 841.45v2.4" stroke-width="2"/></g><path d="M746.5 872.2 L756.9 890.3000000000001 L736.0999999999999 890.3000000000001 Z" fill="#ffd60a" stroke="#ffd60a" stroke-width="6.0" stroke-linejoin="round"/><path d="M746.5 876.8000000000001V883.8000000000001" stroke="#000" stroke-width="2.4" stroke-linecap="round"/><circle cx="746.5" cy="887.5" r="1.6" fill="#000"/><g stroke="#ff9f0a" fill="none" stroke-width="2.2"><rect x="783.10" y="873.25" width="25.00" height="15.50" rx="3.6"/><path d="M787.10 872.55v-2.4M787.10 889.45v2.4M791.28 872.55v-2.4M791.28 889.45v2.4M795.46 872.55v-2.4M795.46 889.45v2.4M799.64 872.55v-2.4M799.64 889.45v2.4M803.82 872.55v-2.4M803.82 889.45v2.4" stroke-width="2"/></g><path d="M746.5 920.2 L756.9 938.3000000000001 L736.0999999999999 938.3000000000001 Z" fill="#ffd60a" stroke="#ffd60a" stroke-width="6.0" stroke-linejoin="round"/><path d="M746.5 924.8000000000001V931.8000000000001" stroke="#000" stroke-width="2.4" stroke-linecap="round"/><circle cx="746.5" cy="935.5" r="1.6" fill="#000"/><g stroke="#ff9f0a" fill="none" stroke-width="2.2"><rect x="783.10" y="921.25" width="25.00" height="15.50" rx="3.6"/><path d="M787.10 920.55v-2.4M787.10 937.45v2.4M791.28 920.55v-2.4M791.28 937.45v2.4M795.46 920.55v-2.4M795.46 937.45v2.4M799.64 920.55v-2.4M799.64 937.45v2.4M803.82 920.55v-2.4M803.82 937.45v2.4" stroke-width="2"/></g><g stroke="#dfe0e0" fill="none" stroke-width="2.2"><rect x="734.20" y="969.10" width="25.00" height="15.50" rx="3.6"/><path d="M738.20 968.40v-2.4M738.20 985.30v2.4M742.38 968.40v-2.4M742.38 985.30v2.4M746.56 968.40v-2.4M746.56 985.30v2.4M750.74 968.40v-2.4M750.74 985.30v2.4M754.92 968.40v-2.4M754.92 985.30v2.4" stroke-width="2"/></g><g stroke="#dfe0e0" fill="none" stroke-width="2.2"><rect x="734.20" y="1017.10" width="25.00" height="15.50" rx="3.6"/><path d="M738.20 1016.40v-2.4M738.20 1033.30v2.4M742.38 1016.40v-2.4M742.38 1033.30v2.4M746.56 1016.40v-2.4M746.56 1033.30v2.4M750.74 1016.40v-2.4M750.74 1033.30v2.4M754.92 1016.40v-2.4M754.92 1033.30v2.4" stroke-width="2"/></g><g stroke="#dfe0e0" fill="none" stroke-width="2.2"><rect x="734.20" y="1065.10" width="25.00" height="15.50" rx="3.6"/><path d="M738.20 1064.40v-2.4M738.20 1081.30v2.4M742.38 1064.40v-2.4M742.38 1081.30v2.4M746.56 1064.40v-2.4M746.56 1081.30v2.4M750.74 1064.40v-2.4M750.74 1081.30v2.4M754.92 1064.40v-2.4M754.92 1081.30v2.4" stroke-width="2"/></g><g transform="translate(720 1096)" fill="#dfe0e0"><path d="M13.0 17.2 C12.7 14.6 14.6 12.6 17.2 12.8 C18.6 12.9 21.2 16.6 21.9 18.6 C22.4 20.2 20.6 21.6 20.1 23.0 C21.2 25.6 23.8 28.2 26.6 29.6 C28.0 29.2 29.6 27.4 31.2 28.0 C33.2 28.8 36.6 31.2 37.0 32.8 C37.4 35.0 34.6 37.4 31.4 37.2 C27.6 36.8 22.2 33.6 18.4 29.4 C15.2 25.8 13.4 21.0 13.0 17.2 Z"/><circle cx="27.0" cy="23.5" r="2.1"/><circle cx="32.9" cy="17.8" r="2.1"/><path d="M27.9 18.7 L32.4 23.0 M33.9 12.5 L38.1 16.8" stroke="#dfe0e0" stroke-width="2.1" stroke-linecap="round" fill="none"/></g><g transform="translate(720 1144)" fill="#dfe0e0"><path d="M13.0 17.2 C12.7 14.6 14.6 12.6 17.2 12.8 C18.6 12.9 21.2 16.6 21.9 18.6 C22.4 20.2 20.6 21.6 20.1 23.0 C21.2 25.6 23.8 28.2 26.6 29.6 C28.0 29.2 29.6 27.4 31.2 28.0 C33.2 28.8 36.6 31.2 37.0 32.8 C37.4 35.0 34.6 37.4 31.4 37.2 C27.6 36.8 22.2 33.6 18.4 29.4 C15.2 25.8 13.4 21.0 13.0 17.2 Z"/><circle cx="27.0" cy="23.5" r="2.1"/><circle cx="32.9" cy="17.8" r="2.1"/><path d="M27.9 18.7 L32.4 23.0 M33.9 12.5 L38.1 16.8" stroke="#dfe0e0" stroke-width="2.1" stroke-linecap="round" fill="none"/></g><g transform="translate(720 1192)" fill="#dfe0e0"><path d="M13.0 17.2 C12.7 14.6 14.6 12.6 17.2 12.8 C18.6 12.9 21.2 16.6 21.9 18.6 C22.4 20.2 20.6 21.6 20.1 23.0 C21.2 25.6 23.8 28.2 26.6 29.6 C28.0 29.2 29.6 27.4 31.2 28.0 C33.2 28.8 36.6 31.2 37.0 32.8 C37.4 35.0 34.6 37.4 31.4 37.2 C27.6 36.8 22.2 33.6 18.4 29.4 C15.2 25.8 13.4 21.0 13.0 17.2 Z"/><circle cx="27.0" cy="23.5" r="2.1"/><circle cx="32.9" cy="17.8" r="2.1"/><path d="M27.9 18.7 L32.4 23.0 M33.9 12.5 L38.1 16.8" stroke="#dfe0e0" stroke-width="2.1" stroke-linecap="round" fill="none"/></g><g transform="translate(720 1240)" fill="#dfe0e0"><path d="M13.0 17.2 C12.7 14.6 14.6 12.6 17.2 12.8 C18.6 12.9 21.2 16.6 21.9 18.6 C22.4 20.2 20.6 21.6 20.1 23.0 C21.2 25.6 23.8 28.2 26.6 29.6 C28.0 29.2 29.6 27.4 31.2 28.0 C33.2 28.8 36.6 31.2 37.0 32.8 C37.4 35.0 34.6 37.4 31.4 37.2 C27.6 36.8 22.2 33.6 18.4 29.4 C15.2 25.8 13.4 21.0 13.0 17.2 Z"/><circle cx="27.0" cy="23.5" r="2.1"/><circle cx="32.9" cy="17.8" r="2.1"/><path d="M27.9 18.7 L32.4 23.0 M33.9 12.5 L38.1 16.8" stroke="#dfe0e0" stroke-width="2.1" stroke-linecap="round" fill="none"/></g><g transform="translate(720 1288)" fill="#dfe0e0"><path d="M13.0 17.2 C12.7 14.6 14.6 12.6 17.2 12.8 C18.6 12.9 21.2 16.6 21.9 18.6 C22.4 20.2 20.6 21.6 20.1 23.0 C21.2 25.6 23.8 28.2 26.6 29.6 C28.0 29.2 29.6 27.4 31.2 28.0 C33.2 28.8 36.6 31.2 37.0 32.8 C37.4 35.0 34.6 37.4 31.4 37.2 C27.6 36.8 22.2 33.6 18.4 29.4 C15.2 25.8 13.4 21.0 13.0 17.2 Z"/><circle cx="27.0" cy="23.5" r="2.1"/><circle cx="32.9" cy="17.8" r="2.1"/><path d="M27.9 18.7 L32.4 23.0 M33.9 12.5 L38.1 16.8" stroke="#dfe0e0" stroke-width="2.1" stroke-linecap="round" fill="none"/></g><g stroke="#dfe0e0" fill="none" stroke-width="2.2"><rect x="734.20" y="1353.10" width="25.00" height="15.50" rx="3.6"/><path d="M738.20 1352.40v-2.4M738.20 1369.30v2.4M742.38 1352.40v-2.4M742.38 1369.30v2.4M746.56 1352.40v-2.4M746.56 1369.30v2.4M750.74 1352.40v-2.4M750.74 1369.30v2.4M754.92 1352.40v-2.4M754.92 1369.30v2.4" stroke-width="2"/></g><g transform="translate(720 1384)" fill="#dfe0e0"><path d="M13.0 17.2 C12.7 14.6 14.6 12.6 17.2 12.8 C18.6 12.9 21.2 16.6 21.9 18.6 C22.4 20.2 20.6 21.6 20.1 23.0 C21.2 25.6 23.8 28.2 26.6 29.6 C28.0 29.2 29.6 27.4 31.2 28.0 C33.2 28.8 36.6 31.2 37.0 32.8 C37.4 35.0 34.6 37.4 31.4 37.2 C27.6 36.8 22.2 33.6 18.4 29.4 C15.2 25.8 13.4 21.0 13.0 17.2 Z"/><circle cx="27.0" cy="23.5" r="2.1"/><circle cx="32.9" cy="17.8" r="2.1"/><path d="M27.9 18.7 L32.4 23.0 M33.9 12.5 L38.1 16.8" stroke="#dfe0e0" stroke-width="2.1" stroke-linecap="round" fill="none"/></g><g transform="translate(720 1432)" fill="#dfe0e0"><path d="M13.0 17.2 C12.7 14.6 14.6 12.6 17.2 12.8 C18.6 12.9 21.2 16.6 21.9 18.6 C22.4 20.2 20.6 21.6 20.1 23.0 C21.2 25.6 23.8 28.2 26.6 29.6 C28.0 29.2 29.6 27.4 31.2 28.0 C33.2 28.8 36.6 31.2 37.0 32.8 C37.4 35.0 34.6 37.4 31.4 37.2 C27.6 36.8 22.2 33.6 18.4 29.4 C15.2 25.8 13.4 21.0 13.0 17.2 Z"/><circle cx="27.0" cy="23.5" r="2.1"/><circle cx="32.9" cy="17.8" r="2.1"/><path d="M27.9 18.7 L32.4 23.0 M33.9 12.5 L38.1 16.8" stroke="#dfe0e0" stroke-width="2.1" stroke-linecap="round" fill="none"/></g><g transform="translate(720 1480)" fill="#dfe0e0"><path d="M13.0 17.2 C12.7 14.6 14.6 12.6 17.2 12.8 C18.6 12.9 21.2 16.6 21.9 18.6 C22.4 20.2 20.6 21.6 20.1 23.0 C21.2 25.6 23.8 28.2 26.6 29.6 C28.0 29.2 29.6 27.4 31.2 28.0 C33.2 28.8 36.6 31.2 37.0 32.8 C37.4 35.0 34.6 37.4 31.4 37.2 C27.6 36.8 22.2 33.6 18.4 29.4 C15.2 25.8 13.4 21.0 13.0 17.2 Z"/><circle cx="27.0" cy="23.5" r="2.1"/><circle cx="32.9" cy="17.8" r="2.1"/><path d="M27.9 18.7 L32.4 23.0 M33.9 12.5 L38.1 16.8" stroke="#dfe0e0" stroke-width="2.1" stroke-linecap="round" fill="none"/></g><path d="M746.5 1544.1999999999998 L756.9 1562.3 L736.0999999999999 1562.3 Z" fill="#ffd60a" stroke="#ffd60a" stroke-width="6.0" stroke-linejoin="round"/><path d="M746.5 1548.8V1555.8" stroke="#000" stroke-width="2.4" stroke-linecap="round"/><circle cx="746.5" cy="1559.5" r="1.6" fill="#000"/><g stroke="#ff9f0a" fill="none" stroke-width="2.2"><rect x="783.10" y="1545.25" width="25.00" height="15.50" rx="3.6"/><path d="M787.10 1544.55v-2.4M787.10 1561.45v2.4M791.28 1544.55v-2.4M791.28 1561.45v2.4M795.46 1544.55v-2.4M795.46 1561.45v2.4M799.64 1544.55v-2.4M799.64 1561.45v2.4M803.82 1544.55v-2.4M803.82 1561.45v2.4" stroke-width="2"/></g><path d="M746.5 1592.1999999999998 L756.9 1610.3 L736.0999999999999 1610.3 Z" fill="#ffd60a" stroke="#ffd60a" stroke-width="6.0" stroke-linejoin="round"/><path d="M746.5 1596.8V1603.8" stroke="#000" stroke-width="2.4" stroke-linecap="round"/><circle cx="746.5" cy="1607.5" r="1.6" fill="#000"/><g stroke="#ff9f0a" fill="none" stroke-width="2.2"><rect x="783.10" y="1593.25" width="25.00" height="15.50" rx="3.6"/><path d="M787.10 1592.55v-2.4M787.10 1609.45v2.4M791.28 1592.55v-2.4M791.28 1609.45v2.4M795.46 1592.55v-2.4M795.46 1609.45v2.4M799.64 1592.55v-2.4M799.64 1609.45v2.4M803.82 1592.55v-2.4M803.82 1609.45v2.4" stroke-width="2"/></g><path d="M746.5 1640.1999999999998 L756.9 1658.3 L736.0999999999999 1658.3 Z" fill="#ffd60a" stroke="#ffd60a" stroke-width="6.0" stroke-linejoin="round"/><path d="M746.5 1644.8V1651.8" stroke="#000" stroke-width="2.4" stroke-linecap="round"/><circle cx="746.5" cy="1655.5" r="1.6" fill="#000"/><g stroke="#ff9f0a" fill="none" stroke-width="2.2"><rect x="783.10" y="1641.25" width="25.00" height="15.50" rx="3.6"/><path d="M787.10 1640.55v-2.4M787.10 1657.45v2.4M791.28 1640.55v-2.4M791.28 1657.45v2.4M795.46 1640.55v-2.4M795.46 1657.45v2.4M799.64 1640.55v-2.4M799.64 1657.45v2.4M803.82 1640.55v-2.4M803.82 1657.45v2.4" stroke-width="2"/></g><path d="M746.5 1688.1999999999998 L756.9 1706.3 L736.0999999999999 1706.3 Z" fill="#ffd60a" stroke="#ffd60a" stroke-width="6.0" stroke-linejoin="round"/><path d="M746.5 1692.8V1699.8" stroke="#000" stroke-width="2.4" stroke-linecap="round"/><circle cx="746.5" cy="1703.5" r="1.6" fill="#000"/><g stroke="#ff9f0a" fill="none" stroke-width="2.2"><rect x="783.10" y="1689.25" width="25.00" height="15.50" rx="3.6"/><path d="M787.10 1688.55v-2.4M787.10 1705.45v2.4M791.28 1688.55v-2.4M791.28 1705.45v2.4M795.46 1688.55v-2.4M795.46 1705.45v2.4M799.64 1688.55v-2.4M799.64 1705.45v2.4M803.82 1688.55v-2.4M803.82 1705.45v2.4" stroke-width="2"/></g></g><g stroke="#e6e6e6" stroke-width="2.5" fill="none" stroke-linecap="round"><circle cx="164.5" cy="376.2" r="11.7"/><path d="M150.15 376.2H159.1M169.9 376.2H178.85M164.5 361.84999999999997V370.8M164.5 381.59999999999997V390.55"/></g><g stroke="#6c6d70" stroke-width="2.6" fill="none" stroke-linecap="round"><circle cx="1901.8" cy="127.2" r="14.4"/><path d="M1883.35 127.2H1894.8999999999999M1908.7 127.2H1920.25M1901.8 108.75V120.3M1901.8 134.1V145.64999999999998"/></g><path d="M480.3 1748.3 L490.7 1766.4 L469.90000000000003 1766.4 Z" fill="#ff9f0a" stroke="#ff9f0a" stroke-width="6.0" stroke-linejoin="round"/><path d="M480.3 1752.9V1759.9" stroke="#1d1d1f" stroke-width="2.4" stroke-linecap="round"/><circle cx="480.3" cy="1763.6000000000001" r="1.6" fill="#1d1d1f"/></svg>
</body></html>
